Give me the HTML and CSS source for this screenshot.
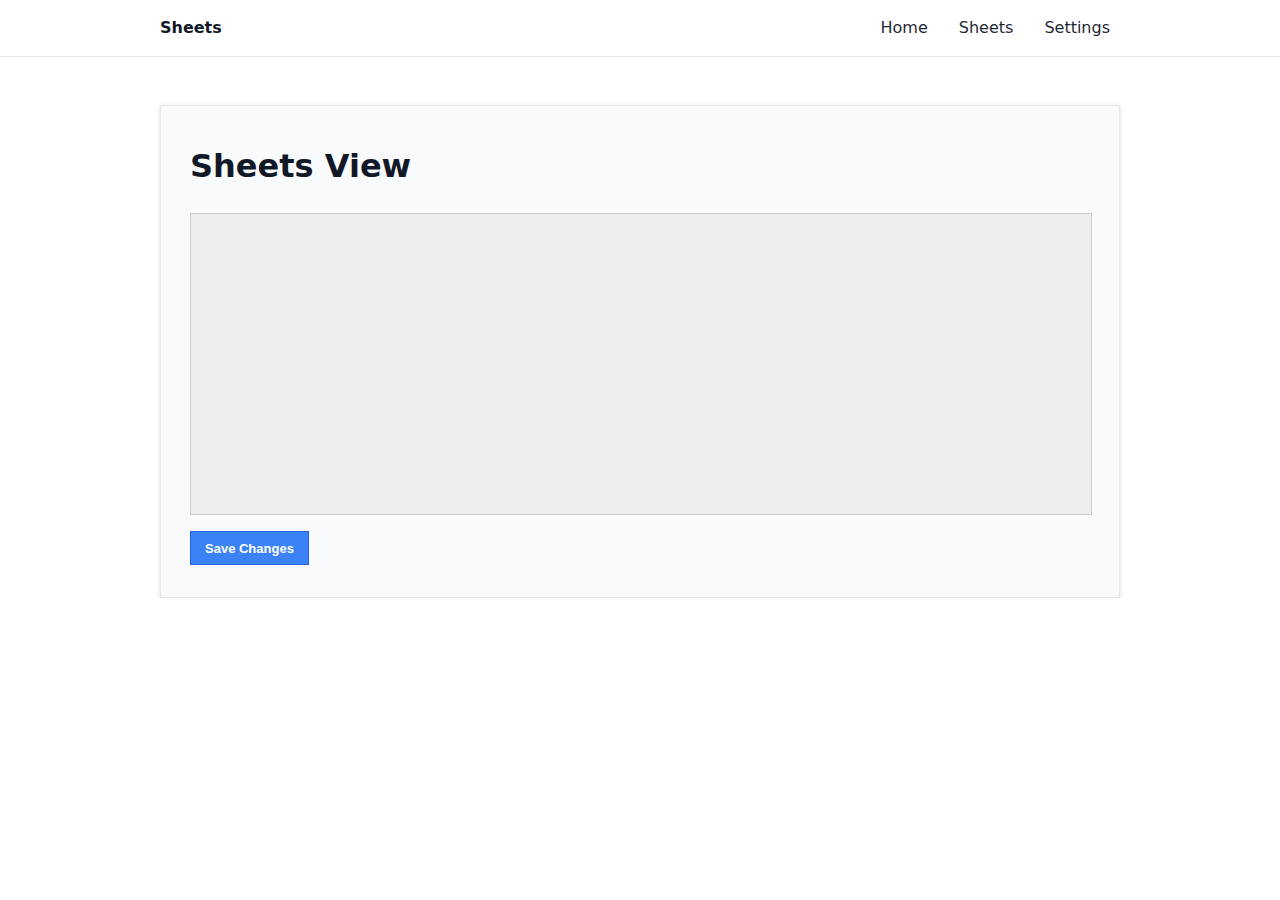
FILE: index.html
```html
<!DOCTYPE html>
<html lang="en">
<head>
    <meta charset="UTF-8">
    <meta name="viewport" content="width=device-width, initial-scale=1.0">
    <link rel="stylesheet" href="styles.css">
    <title>Sheets</title>
</head>
<body>
    <header class="topbar">
        <div class="topbar-inner">
            <a class="brand" href="#">Sheets</a>
            <nav class="nav">
                <a href="#">Home</a>
                <a href="#">Sheets</a>
                <a href="#">Settings</a>
            </nav>
        </div>
    </header>
    <main class="page">
        <section class="card">
            <h1>Sheets View</h1>
            <div id="sheetArea" class="sheet-area"></div>
            <button id="saveButton" class="save-button">Save Changes</button>
        </section>
    </main>
</body>
</html>
```

FILE: styles.css
```css
body {
    font-family: "DejaVu Sans", sans-serif;
    background-color: #fff;
    color: #1f2937;
    margin: 0;
    padding: 0;
}

a {
    text-decoration: none;
    color: inherit;
}

.topbar {
    height: 56px;
    border-bottom: 1px solid #e5e7eb;
}

.topbar-inner {
    width: 960px;
    height: 100%;
    margin: 0 auto;
    padding-bottom: 2px;
    box-sizing: border-box;
    display: flex;
    align-items: center;
    justify-content: space-between;
}

.brand {
    font-weight: bold;
    font-size: 16px;
    color: #111827;
}

.nav {
    display: flex;
    gap: 11px;
}

.nav a {
    font-size: 16px;
    padding: 0 10px;
    color: #1f2937;
}

.page {
    width: 960px;
    margin: 48px auto 0;
}

.card {
    background-color: #f9fafb;
    border: 1px solid #e5e7eb;
    box-shadow: 0 1px 4px rgba(0, 0, 0, 0.12);
    padding: 29px 29px 32px;
}

h1 {
    font-size: 32px;
    color: #111827;
    margin: 12px 0 28px;
}

.sheet-area {
    height: 300px;
    margin-right: -2px;
    background-color: #eeeeee;
    border: 1px solid #cccccc;
}

.save-button {
    display: block;
    margin-top: 16px;
    font-family: "Liberation Sans", Arial, sans-serif;
    font-weight: bold;
    font-size: 13px;
    color: #fff;
    background-color: #3b82f6;
    border: 1px solid #2563eb;
    padding: 0 14px;
    height: 34px;
    cursor: pointer;
}
```
